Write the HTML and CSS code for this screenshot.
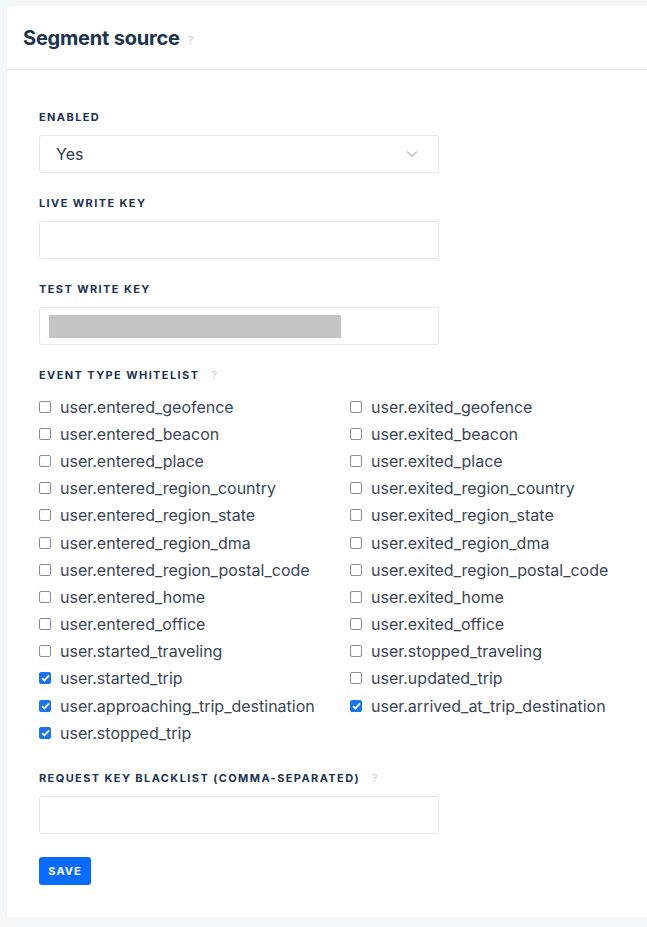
FILE: index.html
```html
<!DOCTYPE html>
<html>
<head>
<meta charset="utf-8">
<link rel="stylesheet" href="styles.css">
</head>
<body>
<div class="card">
  <div class="card-header">
    <h1 class="title">Segment source</h1>
    <span class="help">?</span>
  </div>
  <div class="card-body">
    <div class="field">
      <label class="label">Enabled</label>
      <div class="select">
        <span class="select-value">Yes</span>
        <svg class="chev" width="12" height="8" viewBox="0 0 12 8"><path d="M1 1.5 L6 6 L11 1.5" fill="none" stroke="#b7c0cc" stroke-width="1.4"/></svg>
      </div>
    </div>
    <div class="field">
      <label class="label">Live write key</label>
      <div class="input"></div>
    </div>
    <div class="field">
      <label class="label">Test write key</label>
      <div class="input"><span class="redacted"></span></div>
    </div>
    <div class="field field-checks">
      <label class="label">Event type whitelist <span class="help small">?</span></label>
      <div class="checks">
        <div class="check"><span class="box"></span>user.entered_geofence</div>
        <div class="check"><span class="box"></span>user.exited_geofence</div>
        <div class="check"><span class="box"></span>user.entered_beacon</div>
        <div class="check"><span class="box"></span>user.exited_beacon</div>
        <div class="check"><span class="box"></span>user.entered_place</div>
        <div class="check"><span class="box"></span>user.exited_place</div>
        <div class="check"><span class="box"></span>user.entered_region_country</div>
        <div class="check"><span class="box"></span>user.exited_region_country</div>
        <div class="check"><span class="box"></span>user.entered_region_state</div>
        <div class="check"><span class="box"></span>user.exited_region_state</div>
        <div class="check"><span class="box"></span>user.entered_region_dma</div>
        <div class="check"><span class="box"></span>user.exited_region_dma</div>
        <div class="check"><span class="box"></span>user.entered_region_postal_code</div>
        <div class="check"><span class="box"></span>user.exited_region_postal_code</div>
        <div class="check"><span class="box"></span>user.entered_home</div>
        <div class="check"><span class="box"></span>user.exited_home</div>
        <div class="check"><span class="box"></span>user.entered_office</div>
        <div class="check"><span class="box"></span>user.exited_office</div>
        <div class="check"><span class="box"></span>user.started_traveling</div>
        <div class="check"><span class="box"></span>user.stopped_traveling</div>
        <div class="check"><span class="box on"><svg width="9" height="8" viewBox="0 0 9 8"><path d="M1 4.2 L3.4 6.4 L8 1.4" fill="none" stroke="#fff" stroke-width="1.8"/></svg></span>user.started_trip</div>
        <div class="check"><span class="box"></span>user.updated_trip</div>
        <div class="check"><span class="box on"><svg width="9" height="8" viewBox="0 0 9 8"><path d="M1 4.2 L3.4 6.4 L8 1.4" fill="none" stroke="#fff" stroke-width="1.8"/></svg></span>user.approaching_trip_destination</div>
        <div class="check"><span class="box on"><svg width="9" height="8" viewBox="0 0 9 8"><path d="M1 4.2 L3.4 6.4 L8 1.4" fill="none" stroke="#fff" stroke-width="1.8"/></svg></span>user.arrived_at_trip_destination</div>
        <div class="check"><span class="box on"><svg width="9" height="8" viewBox="0 0 9 8"><path d="M1 4.2 L3.4 6.4 L8 1.4" fill="none" stroke="#fff" stroke-width="1.8"/></svg></span>user.stopped_trip</div>
      </div>
    </div>
    <div class="field">
      <label class="label">Request key blacklist (comma-separated) <span class="help small">?</span></label>
      <div class="input"></div>
    </div>
    <button class="save">Save</button>
  </div>
</div>
</body>
</html>
```
FILE: styles.css
```css
html, body {
  margin: 0;
  padding: 0;
  background: #f4f7fa;
  font-family: Inter, "Noto Sans", sans-serif;
}
body {
  padding: 6px 0 0 7px;
  overflow: hidden;
}
.card {
  width: 660px;
  background: #fff;
  border-radius: 3px;
  box-shadow: 0 1px 2px rgba(30, 50, 80, 0.06);
}
.card-header {
  height: 63px;
  border-bottom: 1px solid #e2e7ed;
  display: flex;
  align-items: center;
  padding-left: 16px;
  gap: 8px;
}
.title {
  margin: 0;
  font-size: 20px;
  font-weight: 700;
  color: #1c3350;
  letter-spacing: -0.2px;
}
.help {
  color: #c5ccd4;
  font-size: 11px;
  margin-top: 4px;
}
.help.small {
  margin-left: 8px;
  font-weight: 400;
  letter-spacing: 0;
}
.card-body {
  padding: 40px 0 32px 32px;
}
.field {
  margin-bottom: 23px;
}
.field-checks {
  margin-bottom: 25px;
}
.label {
  display: block;
  font-size: 11px;
  font-weight: 700;
  text-transform: uppercase;
  letter-spacing: 1.4px;
  color: #1c3350;
  line-height: 14px;
  margin-bottom: 11px;
}
.select, .input {
  width: 398px;
  height: 36px;
  border: 1px solid #e2e7ed;
  border-radius: 3px;
  box-sizing: content-box;
  display: flex;
  align-items: center;
}
.select {
  justify-content: space-between;
}
.select-value {
  font-size: 16px;
  color: #2c3a4b;
  padding-left: 16px;
}
.chev {
  margin-right: 20px;
}
.redacted {
  display: block;
  width: 292px;
  height: 23px;
  background: #c4c4c4;
  margin-left: 9px;
}
.checks {
  display: grid;
  grid-template-columns: 311px 1fr;
  margin-top: 3px;
}
.check {
  height: 27.2px;
  display: flex;
  align-items: center;
  font-size: 16px;
  color: #3a4656;
}
.box {
  width: 10px;
  height: 10px;
  border: 1.5px solid #8d8c94;
  border-radius: 2px;
  margin-right: 9px;
  flex: none;
  display: flex;
  align-items: center;
  justify-content: center;
}
.box.on {
  background: #1a74f0;
  border-color: #1a74f0;
}
.save {
  display: block;
  background: #0a6cff;
  color: #fff;
  border: none;
  border-radius: 3px;
  width: 52px;
  height: 28px;
  font-family: Inter, sans-serif;
  font-size: 11px;
  font-weight: 700;
  letter-spacing: 1px;
  text-transform: uppercase;
  padding: 0;
  margin-top: 3px;
}
```
